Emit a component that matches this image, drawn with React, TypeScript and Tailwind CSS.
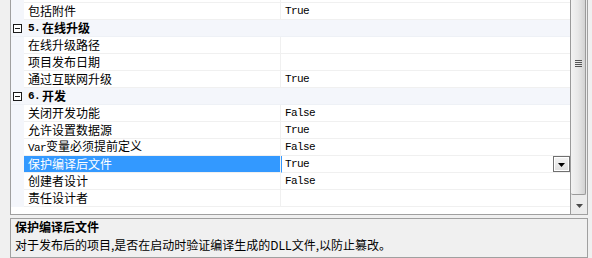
import React from "react";

const CJK = { fontFamily: '"Noto Sans CJK SC", "Noto Sans", sans-serif' };
const MONO = { fontFamily: '"Liberation Mono", "DejaVu Sans Mono", monospace' };

function Mono({ children }: { children: React.ReactNode }) {
  return (
    <span className="text-[11px] tracking-[-0.6px]" style={MONO}>
      {children}
    </span>
  );
}

type RowProps = {
  name: React.ReactNode;
  value?: string;
  selected?: boolean;
};

function Row({ name, value, selected }: RowProps) {
  return (
    <div className="flex h-[17px] shrink-0">
      <div className="w-[13px] shrink-0 bg-[#f4f6fb]" />
      <div
        className={
          selected
            ? "w-[256px] shrink-0 border-b border-[#f0f0f0] bg-[#3399ff] text-white pl-[4px] flex items-center text-[12px] leading-none"
            : "w-[256px] shrink-0 border-b border-[#f0f0f0] text-black pl-[4px] flex items-center text-[12px] leading-none"
        }
      >
        <span className="whitespace-nowrap">{name}</span>
      </div>
      <div className="w-px shrink-0 bg-[#f0f0f0]" />
      <div
        className={
          selected
            ? "flex-1 border-b border-l border-[#f0f0f0] border-l-[#3399ff] pl-[3px] flex items-center text-black"
            : "flex-1 border-b border-[#f0f0f0] pl-[4px] flex items-center text-black"
        }
      >
        {value ? <Mono>{value}</Mono> : null}
        {selected ? (
          <div className="ml-auto h-[16px] w-[17px] border border-[#707070] bg-gradient-to-b from-[#f4f4f4] to-[#dedede] flex items-center justify-center shadow-[inset_0_0_0_1px_#ffffff]">
            <svg width="7" height="4" viewBox="0 0 7 4" className="mt-[2px]">
              <polygon points="0,0 7,0 3.5,4" fill="#000" />
            </svg>
          </div>
        ) : null}
      </div>
    </div>
  );
}

function Group({ num, title }: { num: string; title: string }) {
  return (
    <div className="flex h-[17px] shrink-0 items-center bg-[#f4f6fb] border-b border-[#eef1f6]">
      <svg width="9" height="9" viewBox="0 0 9 9" className="ml-[2px] shrink-0">
        <rect x="0.5" y="0.5" width="8" height="8" fill="#ffffff" stroke="#1a1a1a" />
        <line x1="2" y1="4.5" x2="7" y2="4.5" stroke="#1a1a1a" />
      </svg>
      <span className="ml-[6px] flex items-center text-[12px] font-bold leading-none text-black whitespace-nowrap">
        <span className="text-[11px] tracking-[-0.6px] mr-[2px]" style={MONO}>
          {num}
        </span>
        {title}
      </span>
    </div>
  );
}

function Scrollbar() {
  return (
    <div className="w-[17px] shrink-0 flex flex-col bg-[#ececec] border-l border-[#9a9a9a]">
      <div className="h-[195px] w-[15px] border-r border-b border-[#9a9a9a] rounded-b-[2px] bg-gradient-to-r from-[#f3f3f3] via-[#e8e8e8] to-[#d2d2d2] pt-[60px] flex flex-col items-center">
        <div className="flex flex-col gap-[1px]">
          <div className="w-[7px] h-px bg-[#555555]" />
          <div className="w-[7px] h-px bg-[#555555]" />
          <div className="w-[7px] h-px bg-[#555555]" />
          <div className="w-[7px] h-px bg-[#555555]" />
        </div>
      </div>
      <div className="flex-1" />
      <div className="h-[17px] flex items-center justify-center">
        <svg width="7" height="4" viewBox="0 0 7 4">
          <polygon points="0,0 7,0 3.5,4" fill="#4a4a4a" />
        </svg>
      </div>
    </div>
  );
}

export default function App() {
  return (
    <div
      className="w-[592px] h-[258px] overflow-hidden bg-[#f0f0f0] pl-[10px] pr-[4px] flex flex-col"
      style={CJK}
    >
      <div className="h-[215px] shrink-0 border-l border-r border-b border-[#a0a0a0] bg-white flex">
        <div className="flex-1 flex flex-col">
          <div className="flex h-[3px] shrink-0">
            <div className="w-[13px] shrink-0 bg-[#f4f6fb]" />
            <div className="w-[256px] shrink-0 border-b border-[#f0f0f0]" />
            <div className="w-px shrink-0 bg-[#f0f0f0]" />
            <div className="flex-1 border-b border-[#f0f0f0]" />
          </div>
          <Row name="包括附件" value="True" />
          <Group num="5." title="在线升级" />
          <Row name="在线升级路径" />
          <Row name="项目发布日期" />
          <Row name="通过互联网升级" value="True" />
          <Group num="6." title="开发" />
          <Row name="关闭开发功能" value="False" />
          <Row name="允许设置数据源" value="True" />
          <Row
            name={
              <>
                <Mono>Var</Mono>变量必须提前定义
              </>
            }
            value="False"
          />
          <Row name="保护编译后文件" value="True" selected />
          <Row name="创建者设计" value="False" />
          <Row name="责任设计者" />
          <div className="flex-1" />
        </div>
        <Scrollbar />
      </div>
      <div className="mt-[3px] flex-1 border border-[#a0a0a0] bg-[#f0f0f0] pl-[4px] text-black">
        <div className="h-[16px] leading-[16px] text-[12px] font-bold whitespace-nowrap">
          保护编译后文件
        </div>
        <div className="mt-[2px] h-[16px] leading-[16px] text-[12px] whitespace-nowrap">
          对于发布后的项目,是否在启动时验证编译生成的DLL文件,以防止篡改。
        </div>
      </div>
    </div>
  );
}
